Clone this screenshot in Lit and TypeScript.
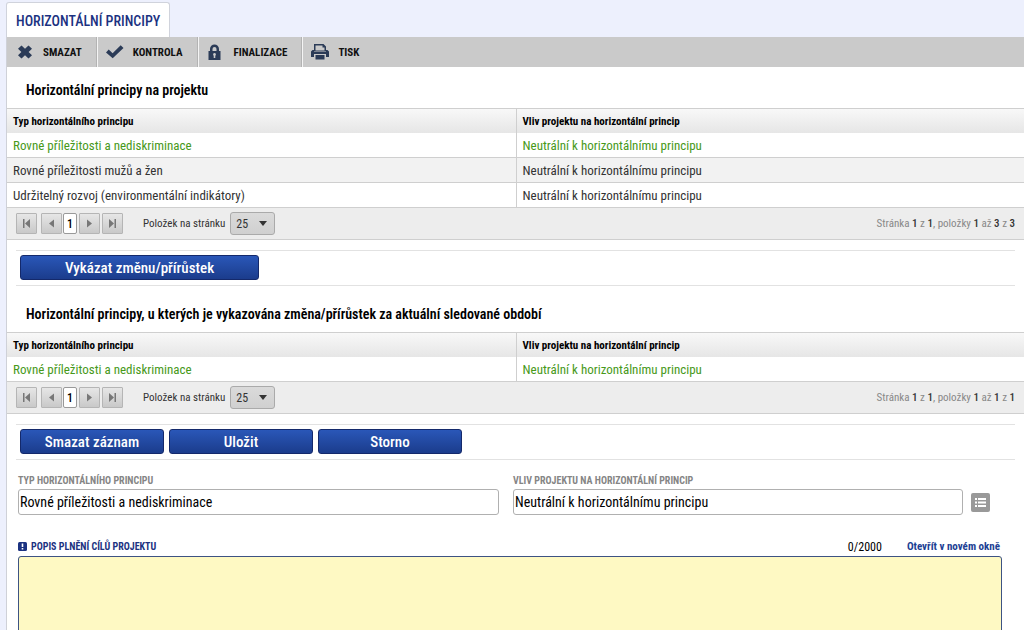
import { LitElement, html, css, svg } from "lit";
import { customElement, property } from "lit/decorators.js";
import { classMap } from "lit/directives/class-map.js";

const base = css`
  * { box-sizing: border-box; }
  button, input, select, textarea { font: inherit; color: inherit; margin: 0; }
  svg { display: block; }
`;

interface Row { type: string; impact: string; active?: boolean; }

const neutral = "Neutrální k horizontálnímu principu";
const projectRows: Row[] = [
  { type: "Rovné příležitosti a nediskriminace", impact: neutral, active: true },
  { type: "Rovné příležitosti mužů a žen", impact: neutral },
  { type: "Udržitelný rozvoj (environmentální indikátory)", impact: neutral },
];
const changedRows: Row[] = [projectRows[0]];

const icons = {
  remove: svg`<path d="M5.500 1.500 9 4.700 12.500 1.500 16 4.700 12.600 8 16 11.300 12.500 14.500 9 11.300 5.500 14.500 2 11.300 5.400 8 2 4.700z"/>`,
  check: svg`<path d="M0 8.500 2.700 5.600 6.600 9.200 14.700 1.300 17.500 4 6.700 14.300z"/>`,
  lock: svg`<path fill-rule="evenodd" d="M3 7V5a4.500 4.500 0 0 1 9 0v2h1.500v9h-12V7zM5.500 7h4V5a2 2 0 0 0-4 0zM7.500 9a1.500 1.500 0 0 0-.8 2.700V14h1.600v-2.300A1.500 1.500 0 0 0 7.500 9z"/>`,
  print: svg`<path fill-rule="evenodd" d="M3 0h9.500L15 2.500V7H3zM4.500 1.500v5h9V3.500h-2v-2z"/><path d="M1.500 6H3v1.500h12V6h1.500L18 7.500V13h-3v-3H3v3H0V7.500z"/><path d="M4.500 11h9v4.500h-9z"/>`,
};

@customElement("principle-grid")
export class PrincipleGrid extends LitElement {
  @property({ attribute: false }) rows: Row[] = [];

  static styles = [base, css`
    :host { display: block; }
    table { width: 100%; table-layout: fixed; border-collapse: separate; border-spacing: 0; }
    th, td { height: 25px; padding: 1px 6px 0; text-align: left; white-space: nowrap; line-height: 20px; }
    th { border-top: 1px solid #cfcfcf; background: linear-gradient(#f8f8f8, #e6e6e6); color: #000; font-size: 11px; font-weight: 700; }
    td { border-bottom: 1px solid #cfcfcf; color: #333; font-size: 13px; }
    th + th, td + td { border-left: 1px solid #cfcfcf; }
    tbody tr:nth-child(even) { background: #f2f2f2; }
    tr.active td { color: #47991a; }
    .pager { display: flex; align-items: center; height: 32px; padding: 0 9px; background: #ededed; border-bottom: 1px solid #cfcfcf; font-size: 11px; color: #333; }
    .nav { display: grid; place-items: center; width: 21px; height: 21px; padding: 0; border: 1px solid #b5b5b5; background: linear-gradient(#e6e6e6, #c9c9c9); border-radius: 1px; }
    .nav svg { fill: #777; }
    .before { margin-right: 4px; }
    .after { margin-left: 2px; }
    .page { width: 14px; height: 21px; padding: 0; border: 1px solid #999; border-radius: 2px; background: #fff; color: #000; font-size: 12px; font-weight: 500; margin: 0 2px 0 1px; }
    label { margin: 0 5px 0 20px; font-size: 11px; }
    .select { display: grid; align-items: center; }
    .select > * { grid-area: 1 / 1; }
    select { appearance: none; width: 45px; height: 23px; padding: 0 5px; border: 1px solid #aaa; border-radius: 3px; background: linear-gradient(#dadada, #d0d0d0); font-size: 12px; }
    .select svg { justify-self: end; margin-right: 8px; pointer-events: none; z-index: 1; }
    .info { margin-left: auto; color: #888; }
    .info b { font-weight: 500; color: #333; }
  `];

  private nav(label: string, path: string, side = "") {
    return html`<button class=${classMap({ nav: true, before: side === "before", after: side === "after" })} aria-label=${label}>
      <svg width="11" height="11" viewBox="0 0 11 11"><path d=${path}></path></svg></button>`;
  }

  render() {
    const n = this.rows.length;
    return html`
      <table>
        <thead><tr><th scope="col">Typ horizontálního principu</th><th scope="col">Vliv projektu na horizontální princip</th></tr></thead>
        <tbody>${this.rows.map((r) => html`<tr class=${classMap({ active: !!r.active })}><td>${r.type}</td><td>${r.impact}</td></tr>`)}</tbody>
      </table>
      <div class="pager">
        ${this.nav("První stránka", "M2 1h1.500v9H2zM9 1v9L4 5.500z", "before")}
        ${this.nav("Předchozí stránka", "M8 1.500v8L3 5.500z")}
        <button class="page">1</button>
        ${this.nav("Další stránka", "M3 1.500v8l5-4z")}
        ${this.nav("Poslední stránka", "M7.500 1H9v9H7.500zM2 1v9l5-4.500z", "after")}
        <label for="size">Položek na stránku</label>
        <div class="select">
          <select id="size"><option>25</option></select>
          <svg width="8" height="5" viewBox="0 0 8 5"><path fill="#333" d="M0 0h8L4 5z"></path></svg>
        </div>
        <div class="info">Stránka <b>1</b> z <b>1</b>, položky <b>1</b> až <b>${n}</b> z <b>${n}</b></div>
      </div>`;
  }
}

@customElement("app-root")
export class AppRoot extends LitElement {
  static styles = [base, css`
    :host { display: flex; flex-direction: column; height: 100vh; overflow: hidden; padding: 2px 0 0 6px; background: #edf0fd; font-family: "Roboto Condensed", Roboto, sans-serif; color: #000; }
    nav { display: flex; flex: none; }
    .tab { display: block; height: 35px; padding: 0 9px; border: 1px solid #d0d3dc; border-bottom: 0; border-radius: 3px 3px 0 0; background: #fff; color: #1b3281; font-size: 14px; font-weight: 500; line-height: 36px; text-decoration: none; white-space: nowrap; }
    main { flex: 1; min-height: 0; border-left: 1px solid #cfd1d8; background: #fff; }
    .toolbar { display: flex; height: 30px; background: #cacaca; }
    .tool { display: flex; align-items: center; gap: 9px; height: 30px; padding: 0 14px 0 9px; border: 0; border-right: 1px solid #b3b3b3; background: none; box-shadow: 1px 0 #f4f4f4; color: #111; font-size: 11px; font-weight: 700; white-space: nowrap; }
    .tool:last-child { border: 0; box-shadow: none; }
    .tool svg { fill: #2b3b57; }
    h2 { margin: 13px 0 8px 19px; font-size: 14px; font-weight: 600; line-height: 20px; }
    .actions { display: flex; gap: 5px; height: 36px; margin: 10px 9px 0; padding: 4px 4px; border: solid #e2e2e2; border-width: 1px 0; }
    .actions + h2 { margin-top: 18px; }
    .primary { width: 144px; height: 25px; padding: 0; border: 1px solid #14296b; border-radius: 3px; background: linear-gradient(#2a57b8, #1b3c8c); color: #fff; font-size: 15px; font-weight: 500; white-space: nowrap; }
    .wide { width: 239px; }
    .fields { display: grid; grid-template-columns: 1fr 1fr; gap: 14px; margin: 13px 30px 0 11px; }
    .field { display: grid; grid-template-columns: 1fr auto; column-gap: 8px; align-items: center; }
    .field label { grid-column: 1 / -1; color: #858585; font-size: 10px; font-weight: 700; line-height: 16px; }
    .field input { width: 100%; height: 26px; padding: 0 1px; border: 1px solid #b0b0b0; border-radius: 3px; background: #fff; font-size: 14px; }
    .field input:last-child { grid-column: 1 / -1; }
    .pick { width: 19px; height: 19px; margin-right: 4px; padding: 0; border: 0; background: none; }
    .desc { margin: 22px 22px 0 11px; }
    .desc-head { display: flex; align-items: center; height: 19px; }
    .desc-head label { flex: 1; margin-left: 4px; color: #1b3281; font-size: 10px; font-weight: 700; }
    .count { margin-right: 25px; font-size: 12px; }
    .desc-head a { margin-right: 2px; color: #1d3f94; font-size: 11px; font-weight: 700; text-decoration: none; }
    textarea { display: block; width: 100%; height: 160px; padding: 3px; border: 1px solid #3d5383; border-radius: 3px; background: #fef9c3; resize: none; font-size: 14px; }
  `];

  render() {
    const tool = (name: string, icon: unknown) => html`
      <button class="tool"><svg width="18" height="16" viewBox="0 0 18 16">${icon}</svg>${name}</button>`;
    return html`
      <nav><a class="tab" href="#">HORIZONTÁLNÍ PRINCIPY</a></nav>
      <main>
        <div class="toolbar">
          ${tool("SMAZAT", icons.remove)}${tool("KONTROLA", icons.check)}${tool("FINALIZACE", icons.lock)}${tool("TISK", icons.print)}
        </div>
        <h2>Horizontální principy na projektu</h2>
        <principle-grid .rows=${projectRows}></principle-grid>
        <div class="actions"><button class="primary wide">Vykázat změnu/přírůstek</button></div>
        <h2>Horizontální principy, u kterých je vykazována změna/přírůstek za aktuální sledované období</h2>
        <principle-grid .rows=${changedRows}></principle-grid>
        <div class="actions">
          <button class="primary">Smazat záznam</button><button class="primary">Uložit</button><button class="primary">Storno</button>
        </div>
        <div class="fields">
          <div class="field"><label for="type">TYP HORIZONTÁLNÍHO PRINCIPU</label><input id="type" value="Rovné příležitosti a nediskriminace" /></div>
          <div class="field"><label for="impact">VLIV PROJEKTU NA HORIZONTÁLNÍ PRINCIP</label><input id="impact" value=${neutral} />
            <button class="pick" aria-label="Vybrat"><svg width="19" height="19" viewBox="0 0 19 19"><rect width="19" height="19" rx="2" fill="#999"/><path fill="#fff" d="M4 5h2v2H4zM7 5h8v2H7zM4 8.500h2v2H4zM7 8.500h8v2H7zM4 12h2v2H4zM7 12h8v2H7z"/></svg></button>
          </div>
        </div>
        <div class="desc">
          <div class="desc-head">
            <svg width="9" height="9" viewBox="0 0 9 9"><rect width="9" height="9" rx="1.500" fill="#1b3281"/><path fill="#fff" d="M3.700 1.500h1.600v3.500H3.700zM3.700 6h1.600v1.500H3.700z"/></svg>
            <label for="desc">POPIS PLNĚNÍ CÍLŮ PROJEKTU</label>
            <span class="count">0/2000</span>
            <a href="#">Otevřít v novém okně</a>
          </div>
          <textarea id="desc"></textarea>
        </div>
      </main>`;
  }
}
